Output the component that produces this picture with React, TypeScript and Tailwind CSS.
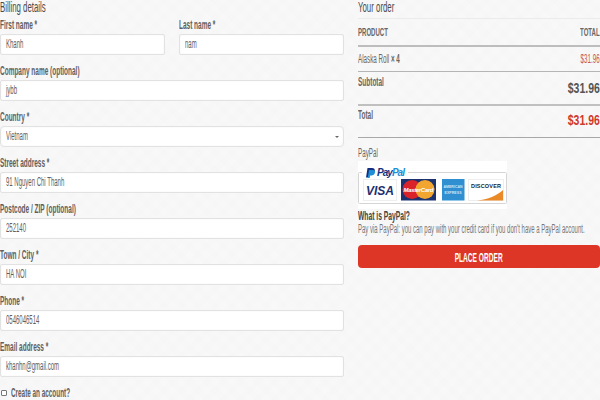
const fieldLabel = 'block text-[12px] leading-[14px] font-bold text-[#5f5f5f] whitespace-nowrap origin-left scale-x-[0.54]'
const fieldInput =
  'block w-full h-[21px] bg-white border border-[#e2e2e2] rounded-[2px] px-[5px] text-[12px] leading-[19px] text-[#5e5e5e] shadow-[inset_0_0_2px_rgba(0,0,0,0.06)]'
const inputText = 'inline-block whitespace-nowrap origin-left scale-x-[0.5]'
const sans = "'Liberation Sans', sans-serif"

function Field({ label, value, className }: { label: string; value: string; className?: string }) {
  return (
    <div className={className}>
      <label className={fieldLabel}>{label}</label>
      <div className={`${fieldInput} mt-[2px]`}>
        <span className={inputText}>{value}</span>
      </div>
    </div>
  )
}

function PaypalCards() {
  return (
    <svg width="149" height="48" viewBox="0 0 149 48" className="block">
      <rect width="149" height="48" fill="#ffffff" />
      <rect x="0.5" y="11.5" width="148" height="31" rx="1" fill="#fff" stroke="#d5d5d5" />
      <rect x="4" y="4" width="46" height="14" fill="#fff" />
      <path d="M9.500 7h4.500c2.400 0 3.200 1.400 2.700 3.200-.5 2-2 3-4 3h-1.600l-.7 3.300H8z" fill="#12307f" />
      <path d="M11 9h3.800c1.800 0 2.500 1.200 2.100 2.700-.5 1.700-1.700 2.700-3.400 2.700h-1.300l-.6 2.600H9.800z" fill="#1c8fd6" />
      <text x="19" y="14.500" fontFamily={sans} fontSize="10" fontWeight="700" fontStyle="italic" fill="#12307f" textLength="28">
        Pay<tspan fill="#1c8fd6">Pal</tspan>
      </text>
      {/* visa */}
      <rect x="5.500" y="18.500" width="33" height="21" fill="#fff" stroke="#eeeeee" />
      <text x="22" y="33.500" textAnchor="middle" fontFamily={sans} fontSize="12" fontWeight="700" fontStyle="italic" fill="#1d2f6f">
        VISA
      </text>
      {/* mastercard */}
      <rect x="43" y="18" width="35" height="21.500" fill="#1b3370" />
      <circle cx="54" cy="28.500" r="9.500" fill="#d9222a" />
      <circle cx="67" cy="28.500" r="9.500" fill="#f2a52f" />
      <text x="60.500" y="31" textAnchor="middle" fontFamily={sans} fontSize="6" fontWeight="700" fontStyle="italic" fill="#fff" textLength="30">
        MasterCard
      </text>
      {/* amex */}
      <rect x="84" y="18" width="22.500" height="21.500" fill="#2f8fd0" />
      <text x="95" y="27" textAnchor="middle" fontFamily={sans} fontSize="3.500" fontWeight="700" fill="#cfe6f6" textLength="19">
        AMERICAN
      </text>
      <text x="95" y="33" textAnchor="middle" fontFamily={sans} fontSize="3.500" fontWeight="700" fill="#cfe6f6" textLength="17">
        EXPRESS
      </text>
      {/* discover */}
      <rect x="110.500" y="18.500" width="35" height="21" fill="#fff" stroke="#eeeeee" />
      <path d="M145 29v10.500h-26c11-1 20-5 26-10.500z" fill="#ea8a26" />
      <text x="128" y="27" textAnchor="middle" fontFamily={sans} fontSize="5.500" fontWeight="700" fill="#222" textLength="30">
        DISCOVER
      </text>
    </svg>
  )
}

export default function App() {
  return (
    <div
      className="w-[600px] h-[400px] overflow-hidden bg-[#f8f8f8] bg-[repeating-linear-gradient(45deg,rgba(0,0,0,0.005)_0_6px,transparent_6px_12px),repeating-linear-gradient(-45deg,rgba(0,0,0,0.005)_0_6px,transparent_6px_12px)] flex gap-[14px] text-[#666]"
      style={{ fontFamily: sans }}
    >
      <div className="w-[344px] shrink-0">
        <h3 className="text-[14px] leading-[14px] text-[#4a4a4a] h-[17px] whitespace-nowrap origin-left scale-x-[0.56]">Billing details</h3>
        <div className="flex flex-col gap-[9px]">
          <div className="flex gap-[14px] mt-[1px]">
            <Field label="First name *" value="Khanh" className="flex-1" />
            <Field label="Last name *" value="nam" className="flex-1" />
          </div>
          <Field label="Company name (optional)" value="jybb" />
          <div>
            <label className={fieldLabel}>Country *</label>
            <div className={`${fieldInput} mt-[2px] rounded-[4px] flex items-center justify-between`}>
              <span className={inputText}>Vietnam</span>
              <span className="border-x-[2px] border-t-[2px] border-x-transparent border-t-[#666] mr-[-1px]" />
            </div>
          </div>
          <Field label="Street address *" value="91 Nguyen Chi Thanh" />
          <Field label="Postcode / ZIP (optional)" value="252140" />
          <Field label="Town / City *" value="HA NOI" />
          <Field label="Phone *" value="0546046514" />
          <Field label="Email address *" value="khanhn@gmail.com" />
          <div className="flex items-center gap-[4px] mt-[1px]">
            <span className="ml-[1px] w-[6px] h-[6px] border border-[#777] bg-white rounded-[1px] shrink-0" />
            <span className="text-[12px] leading-[12px] font-bold text-[#5f5f5f] whitespace-nowrap origin-left scale-x-[0.53]">Create an account?</span>
          </div>
        </div>
      </div>

      <div className="w-[242px] shrink-0">
        <h3 className="text-[14px] leading-[14px] text-[#4a4a4a] h-[18px] whitespace-nowrap origin-left scale-x-[0.56]">Your order</h3>
        <div className="border-t border-[#ebebeb] h-[26px] flex justify-between items-center border-b-2 border-b-[#bdbdbd] box-content text-[11px] font-bold text-[#666]">
          <span className="origin-left scale-x-[0.55]">PRODUCT</span>
          <span className="origin-right scale-x-[0.55]">TOTAL</span>
        </div>
        <div className="h-[24px] flex justify-between items-center border-b border-[#b5b5b5] text-[12px] box-content">
          <span className="whitespace-nowrap origin-left scale-x-[0.52]">
            Alaska Roll <span className="font-bold">× 4</span>
          </span>
          <span className="text-[#c9574a] origin-right scale-x-[0.52]">$31.96</span>
        </div>
        <div className="h-[32px] flex justify-between border-b-2 border-[#c0c0c0] box-content">
          <span className="text-[12px] font-bold pt-[3px] leading-[14px] origin-left scale-x-[0.54]">Subtotal</span>
          <span className="text-[15px] font-bold text-[#555] pt-[7px] leading-[18px] origin-right scale-x-[0.7]">$31.96</span>
        </div>
        <div className="h-[31px] flex justify-between border-b border-[#a8a8a8] box-content">
          <span className="text-[12px] font-bold pt-[2px] leading-[14px] origin-left scale-x-[0.54]">Total</span>
          <span className="text-[15px] font-bold text-[#d0392b] pt-[5px] leading-[18px] origin-right scale-x-[0.7]">$31.96</span>
        </div>
        <div className="text-[12px] leading-[12px] mt-[9px] text-[#666] origin-left scale-x-[0.52]">PayPal</div>
        <div className="mt-[2px]">
          <PaypalCards />
        </div>
        <div className="text-[12px] leading-[14px] font-bold text-[#444] whitespace-nowrap origin-left scale-x-[0.56]">What is PayPal?</div>
        <p className="text-[12px] leading-[12px] text-[#777] whitespace-nowrap origin-left scale-x-[0.5]">
          Pay via PayPal: you can pay with your credit card if you don't have a PayPal account.
        </p>
        <button className="block w-full h-[23px] mt-[10px] bg-[#dd3626] rounded-[4px] text-white">
          <span className="inline-block text-[12px] font-bold whitespace-nowrap scale-x-[0.55]">PLACE ORDER</span>
        </button>
      </div>
    </div>
  )
}
